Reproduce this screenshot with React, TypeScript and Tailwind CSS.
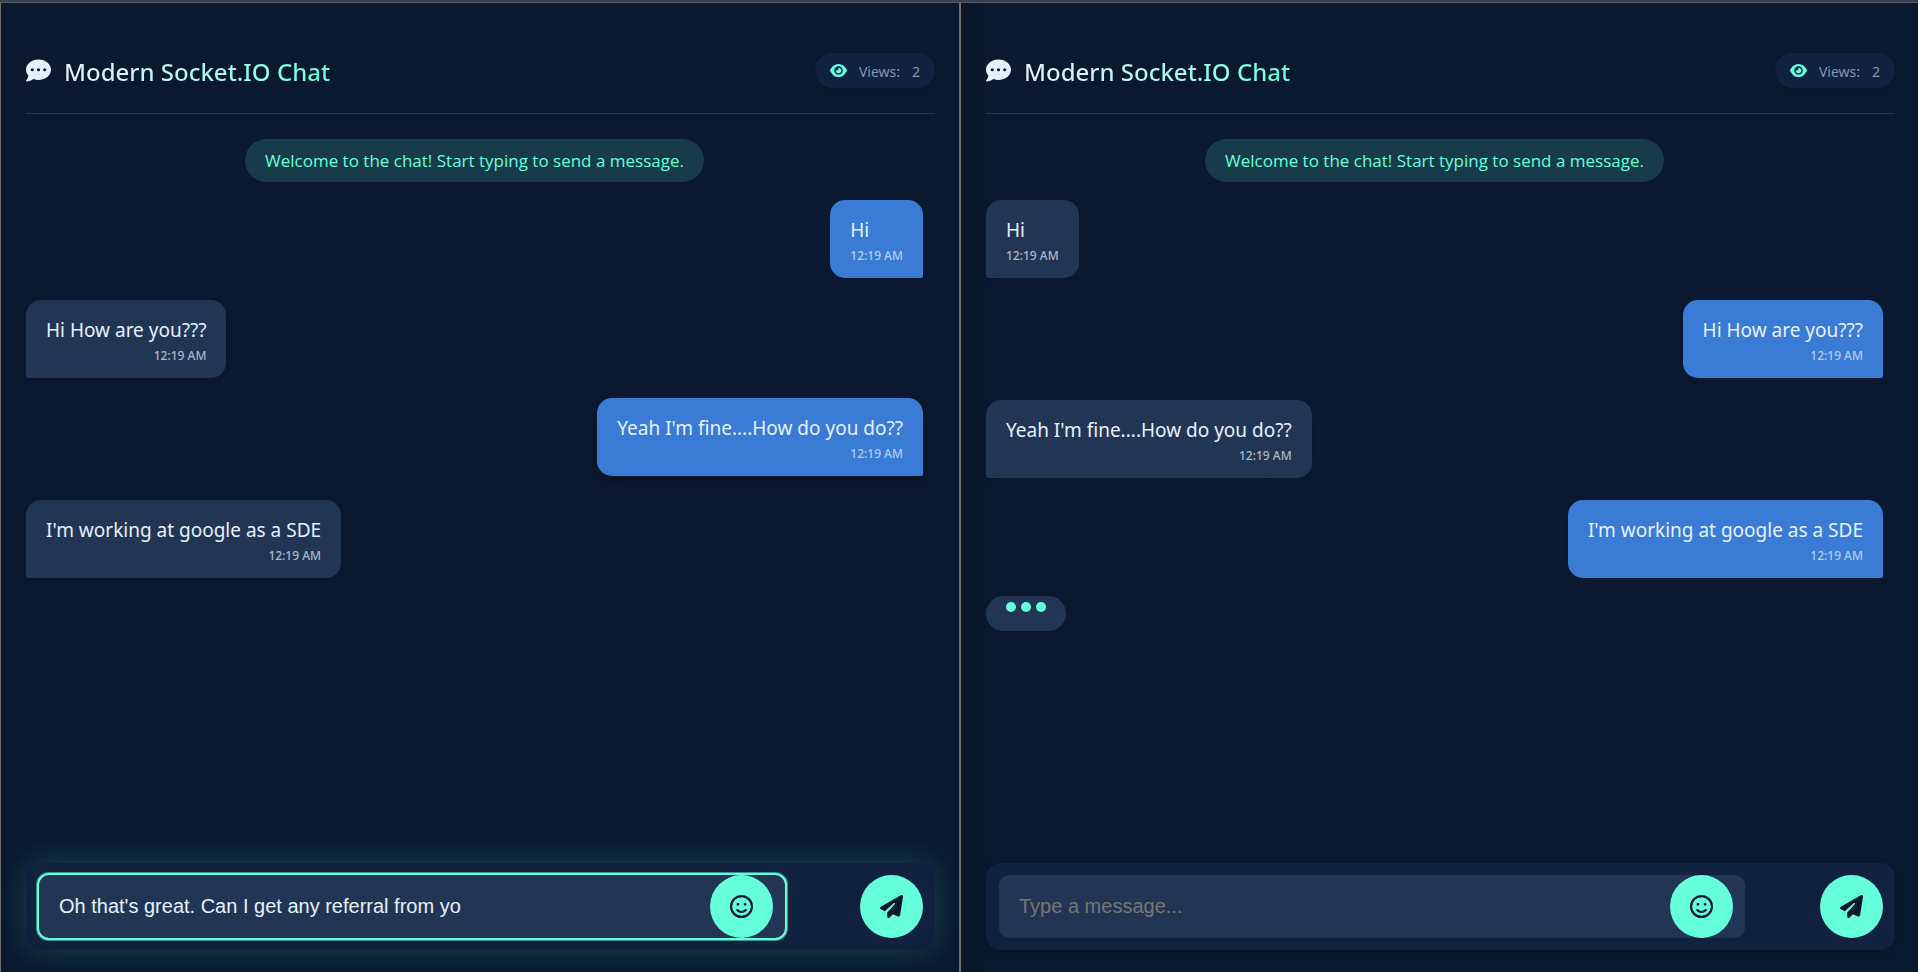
import { FaCommentDots, FaEye, FaPaperPlane, FaRegFaceSmile } from "react-icons/fa6";

type Message = { text: string; time: string; mine: boolean; raised?: boolean };

const left: Message[] = [
  { text: "Hi", time: "12:19 AM", mine: true },
  { text: "Hi How are you???", time: "12:19 AM", mine: false },
  { text: "Yeah I'm fine....How do you do??", time: "12:19 AM", mine: true, raised: true },
  { text: "I'm working at google as a SDE", time: "12:19 AM", mine: false },
];

const right: Message[] = left.map((m) => ({ ...m, mine: !m.mine, raised: false }));

function Bubble({ message }: { message: Message }) {
  const side = message.mine
    ? "self-end rounded-br-xs bg-[#3a7bd5]"
    : "self-start rounded-bl-xs bg-[#233554]";
  const lift = message.raised
    ? "-translate-y-0.5 shadow-[0_6px_12px_rgba(0,0,0,0.2)]"
    : "shadow-[0_2px_5px_rgba(0,0,0,0.1)]";
  return (
    <li className={`flex max-w-[75%] flex-col rounded-[15px] px-5 pt-[15px] pb-[11px] ${side} ${lift}`}>
      <p className="text-[19px] leading-[30px] text-[#e6f1ff]">{message.text}</p>
      <time className="self-end text-[12px] leading-[22px] font-medium text-[#e6f1ff]/70">
        {message.time}
      </time>
    </li>
  );
}

function TypingIndicator() {
  return (
    <div
      role="status"
      aria-label="Typing"
      className="flex h-[35px] items-start gap-[5px] self-start rounded-[18px] bg-[#233554] px-5 pt-1.5"
    >
      <span className="size-2.5 rounded-full bg-[#64ffda]" />
      <span className="size-2.5 rounded-full bg-[#64ffda]" />
      <span className="size-2.5 rounded-full bg-[#64ffda]" />
    </div>
  );
}

type PaneProps = {
  messages: Message[];
  draft?: string;
  focused?: boolean;
  typing?: boolean;
  edge: string;
};

function ChatPane({ messages, draft = "", focused = false, typing = false, edge }: PaneProps) {
  return (
    <section
      className={`flex min-w-0 flex-1 flex-col border-l border-[#707070] pb-[22px] pl-[25px] ${edge}`}
    >
      <header className="mt-6 flex h-[87px] items-center justify-between border-b border-[#233554]">
        <h1 className="flex items-center gap-[13px] text-[24px] font-medium">
          <FaCommentDots className="size-[25px] text-[#e6f1ff]" />
          <span className="bg-linear-to-r from-[#e6f1ff] to-[#64ffda] bg-clip-text pt-1 text-transparent">
            Modern Socket.IO Chat
          </span>
        </h1>
        <p className="flex h-[35px] items-center gap-3 rounded-full bg-[#112240] px-[15px] text-[14px] text-[#8892b0] shadow-[0_4px_6px_rgba(0,0,0,0.1)]">
          <FaEye className="size-[17px] text-[#64ffda]" />
          <span className="pt-0.5">Views:</span>
          <span className="pt-0.5">2</span>
        </p>
      </header>

      <div className="flex flex-1 flex-col gap-[18px] pt-[25px] pr-3">
        <p className="self-center rounded-[22px] bg-[#64ffda]/15 px-5 py-2 font-['Open_Sans','Noto_Sans',sans-serif] text-[17px] leading-[27px] text-[#64ffda]">
          Welcome to the chat! Start typing to send a message.
        </p>
        <ul className="flex flex-col gap-[22px]">
          {messages.map((m) => (
            <Bubble key={m.text} message={m} />
          ))}
        </ul>
        {typing && <TypingIndicator />}
      </div>

      <form
        className={`flex rounded-[15px] bg-[#112240] py-3 pr-3 pl-[13px] ${
          focused ? "shadow-[0_0_30px_rgba(100,255,218,0.2)]" : "shadow-[0_4px_12px_rgba(0,0,0,0.15)]"
        }`}
        onSubmit={(e) => e.preventDefault()}
      >
        <div className="relative mr-[75px] flex min-w-0 flex-1">
          <input
            type="text"
            aria-label="Message"
            defaultValue={draft}
            placeholder="Type a message..."
            className={`h-[63px] w-full rounded-[10px] bg-[#233554] pr-[90px] pl-5 font-['Liberation_Sans',Arial,sans-serif] text-[20px] text-[#e6f1ff] outline-none placeholder:text-[#757575] ${
              focused ? "shadow-[0_0_0_2px_#64ffda,0_0_0_3px_rgba(100,255,218,0.5)]" : ""
            }`}
          />
          <button
            type="button"
            aria-label="Insert emoji"
            className="absolute top-0 right-3 flex size-[63px] items-center justify-center rounded-full bg-[#64ffda] text-[#0a192f]"
          >
            <FaRegFaceSmile className="size-[23px]" />
          </button>
        </div>
        <button
          type="submit"
          aria-label="Send message"
          className="flex size-[63px] items-center justify-center rounded-full bg-[#64ffda] text-[#0a192f]"
        >
          <FaPaperPlane className="size-[23px]" />
        </button>
      </form>
    </section>
  );
}

export default function App() {
  return (
    <div className="flex min-h-screen flex-col bg-[#0a192f] font-['Noto_Sans','Open_Sans',sans-serif]">
      <div className="h-[3px] border-b border-[#5a5d62] bg-[#343f50]" />
      <main className="flex flex-1">
        <ChatPane
          messages={left}
          draft="Oh that's great. Can I get any referral from yo"
          focused
          edge="border-r bg-[#0a192f] pr-6"
        />
        <ChatPane
          messages={right}
          typing
          edge="bg-linear-to-r from-[#081627] to-[#0a192f] to-[35px] pr-[23px]"
        />
      </main>
    </div>
  );
}
